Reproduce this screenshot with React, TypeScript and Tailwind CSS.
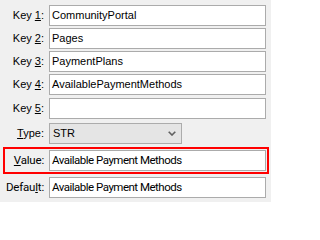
const keys = ["CommunityPortal", "Pages", "PaymentPlans", "AvailablePaymentMethods", ""];
const rowTops = ["mt-[5px]", "mt-[2px]", "mt-[2px]", "mt-[2px]", "mt-[3px]"];

function Field({ value, big }: { value: string; big?: boolean }) {
  return (
    <div
      className={`flex h-[21px] w-[217px] items-center border border-[#ababab] bg-white pl-[2px] text-black ${
        big ? "text-[11.5px] tracking-[-0.5px] [font-family:Roboto,sans-serif]" : "text-[11px]"
      }`}
    >
      {value}
    </div>
  );
}

export default function App() {
  return (
    <div className="h-[202px] w-[271px] overflow-hidden bg-[#f0f0f0] text-[11px] text-black [font-family:'Liberation_Sans',Arial,sans-serif]">
      {keys.map((k, i) => (
        <div key={i} className={`flex items-center ${rowTops[i]}`}>
          <div className="w-[49px] pr-[5px] text-right">
            Key <span className="underline">{i + 1}</span>:
          </div>
          <Field value={k} />
        </div>
      ))}

      <div className="mt-[4px] flex items-center">
        <div className="w-[49px] pr-[5px] text-right">
          <span className="underline">T</span>ype:
        </div>
        <div className="flex h-[21px] w-[133px] items-center justify-between border border-[#acacac] bg-[#e5e5e5] pl-[3px] pr-[5px]">
          <span>STR</span>
          <svg width="8" height="5" viewBox="0 0 8 5" className="text-[#606060]">
            <path d="M0.7 0.7 L4 4 L7.3 0.7" fill="none" stroke="currentColor" strokeWidth="1.6" />
          </svg>
        </div>
      </div>

      <div className="ml-[3px] mt-[3px] flex h-[27px] w-[266px] items-center border-2 border-[#ff0000] [font-family:Roboto,sans-serif]">
        <div className="w-[44px] pr-[5px] text-right text-[11.5px] tracking-[-0.2px]">
          <span className="underline">V</span>alue:
        </div>
        <Field value="Available Payment Methods" big />
      </div>

      <div className="mt-[3px] flex items-center [font-family:Roboto,sans-serif]">
        <div className="w-[49px] pr-[5px] text-right text-[11.5px] tracking-[-0.2px]">
          Defau<span className="underline">l</span>t:
        </div>
        <Field value="Available Payment Methods" big />
      </div>
    </div>
  );
}
